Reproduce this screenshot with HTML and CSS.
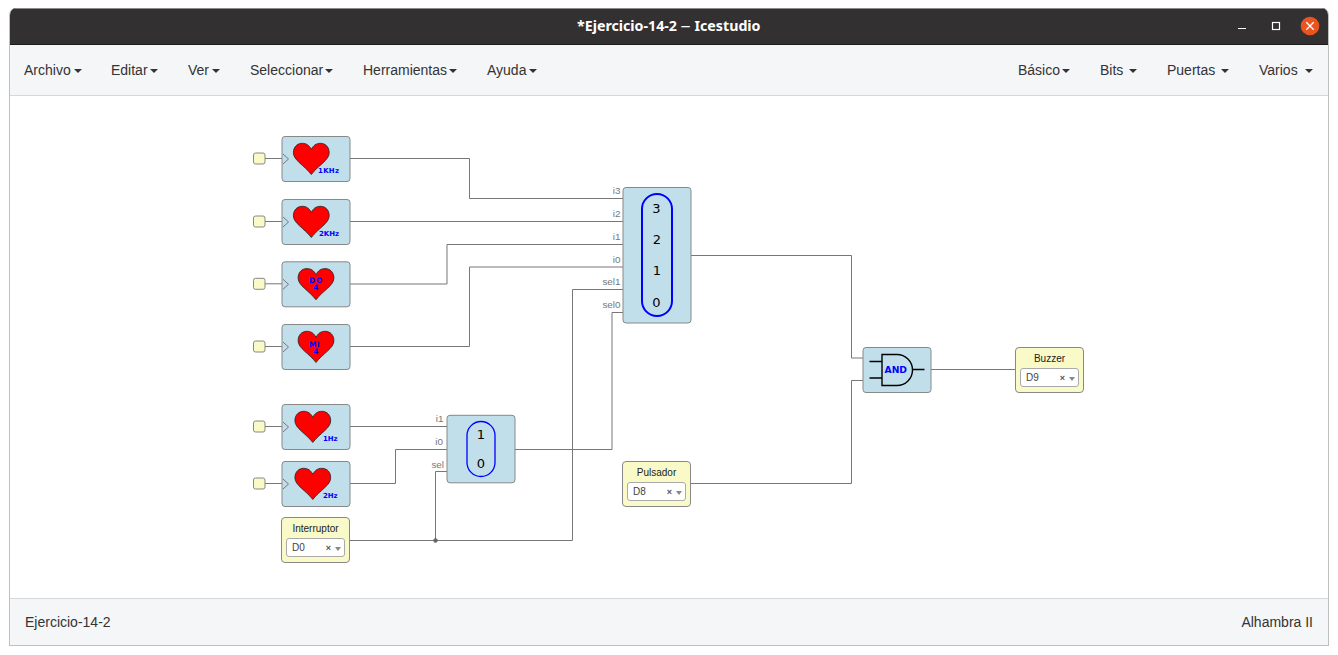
FILE: index.html
```html
<!DOCTYPE html>
<html lang="es">
<head>
<meta charset="utf-8">
<title>Ejercicio-14-2 – Icestudio</title>
<link rel="stylesheet" href="styles.css">
</head>
<body>
<div class="window">
  <header class="titlebar">
    <h1 class="title"><svg width="184" height="20"><text x="0" y="15" textLength="100" lengthAdjust="spacingAndGlyphs">*Ejercicio-14-2</text><text class="dash" x="103.500" y="15" textLength="10" lengthAdjust="spacingAndGlyphs">–</text><text x="117.500" y="15" textLength="66" lengthAdjust="spacingAndGlyphs">Icestudio</text></svg></h1>
    <div class="controls">
      <svg width="82" height="20" viewBox="0 0 82 20">
        <path d="M0 12.5h8" stroke="#fff" stroke-width="1.2"/>
        <rect x="34.5" y="6.5" width="7" height="7" fill="none" stroke="#fff" stroke-width="1.2"/>
        <circle cx="72" cy="10" r="9.3" fill="#e95420"/>
        <path d="M68.3 6.3l7.4 7.4M75.7 6.3l-7.4 7.4" stroke="#fff" stroke-width="1.3"/>
      </svg>
    </div>
  </header>
  <nav class="menubar">
    <ul class="menu">
      <li class="w-archivo">Archivo<i class="caret"></i></li>
      <li class="w-editar">Editar<i class="caret"></i></li>
      <li class="w-ver">Ver<i class="caret"></i></li>
      <li class="w-seleccionar">Seleccionar<i class="caret"></i></li>
      <li class="w-herramientas">Herramientas<i class="caret"></i></li>
      <li class="w-ayuda">Ayuda<i class="caret"></i></li>
    </ul>
    <ul class="menu">
      <li class="w-basico">Básico<i class="caret"></i></li>
      <li class="w-bits">Bits<i class="caret"></i></li>
      <li class="w-puertas">Puertas<i class="caret"></i></li>
      <li class="w-varios">Varios<i class="caret"></i></li>
    </ul>
  </nav>
  <main class="canvas">
    <svg class="graph" width="1318" height="502" viewBox="10 96 1318 502">
      <defs>
        <path id="heart" d="M18 6.500C20 2.500 23 .5 27 .5C32.500 .5 35.900 4.500 35.900 10C35.900 17.500 25 22.500 18 31.700C11 22.500 .1 17.500 .1 10C.1 4.500 3.500 .5 9 .5C13 .5 16 2.500 18 6.500Z"/>
        <g id="clocked">
          <path class="wire" d="M-17 22H0"/>
          <rect class="pin" x="-28.500" y="16.500" width="11.500" height="11" rx="2"/>
          <rect class="block" width="68" height="45" rx="3"/>
          <path class="clk" d="M1 17.500L6.500 22.500L1 27.500"/>
        </g>
      </defs>
      <g class="wire">
        <path d="M350 158.500H469.500V198.500H623"/>
        <path d="M350 221.500H623"/>
        <path d="M350 284H447V244.500H623"/>
        <path d="M350 346.500H469.500V267H623"/>
        <path d="M350 540.500H572.500V289.500H623"/>
        <path d="M515 449.500H612V312.500H623"/>
        <path d="M350 426.500H447"/>
        <path d="M350 483.500H395.500V449.500H447"/>
        <path d="M435.500 540.500V471.500H447"/>
        <path d="M691 255.500H851.500V358H863"/>
        <path d="M691 483.500H851.500V380.500H863"/>
        <path d="M931 369.500H1016"/>
      </g>
      <circle class="node" cx="435.500" cy="540.500" r="2.200"/>
      <g transform="translate(282 136.500)"><use href="#clocked"/><use class="heart" href="#heart" x="11.300" y="6.300"/><text class="freq" x="36" y="36.500" textLength="21">1KHz</text></g>
      <g transform="translate(282 199.500)"><use href="#clocked"/><use class="heart" href="#heart" x="11.300" y="6.300"/><text class="freq" x="37" y="36.500" textLength="20">2KHz</text></g>
      <g transform="translate(282 261.800)"><use href="#clocked"/><use class="heart" href="#heart" x="16" y="6.300"/><text class="freq note" x="27" y="21.700" textLength="13.500">DO</text><text class="freq note" x="31.200" y="28.700">4</text></g>
      <g transform="translate(282 324.500)"><use href="#clocked"/><use class="heart" href="#heart" x="16" y="6.300"/><text class="freq note" x="27" y="22" textLength="10.500">MI</text><text class="freq note" x="31.200" y="29">4</text></g>
      <g transform="translate(282 404.500)"><use href="#clocked"/><use class="heart" href="#heart" x="12.800" y="6.300"/><text class="freq" x="41" y="36.500" textLength="14.500">1Hz</text></g>
      <g transform="translate(282 461.500)"><use href="#clocked"/><use class="heart" href="#heart" x="12.800" y="6.300"/><text class="freq" x="41" y="36.500" textLength="14.500">2Hz</text></g>

      <rect class="block" x="623" y="187.500" width="68" height="135.500" rx="3"/>
      <rect class="slot wide" x="642" y="194" width="30" height="122" rx="15"/>
      <g class="digit"><text x="656.500" y="213">3</text><text x="657" y="244">2</text><text x="657" y="275">1</text><text x="656.500" y="307">0</text></g>
      <g class="port"><text x="620.500" y="194">i3</text><text x="620.500" y="217">i2</text><text x="620.500" y="240">i1</text><text x="620.500" y="263">i0</text><text x="620.500" y="285">sel1</text><text x="620.500" y="308">sel0</text></g>

      <rect class="block" x="447" y="415.300" width="68" height="67.500" rx="3"/>
      <rect class="slot" x="467" y="421.500" width="28" height="55" rx="14"/>
      <g class="digit"><text x="481" y="439">1</text><text x="481" y="468">0</text></g>
      <g class="port"><text x="443.500" y="422">i1</text><text x="443" y="445">i0</text><text x="444" y="468">sel</text></g>

      <rect class="block" x="863" y="347.500" width="68" height="45" rx="3"/>
      <path class="gate" d="M882 354.500H897A15.500 15.500 0 0 1 897 385.500H882ZM869.500 361.500H882M869.500 378H882M912.500 369.500H924.500"/>
      <text class="and" x="884.500" y="373.300" textLength="22.500" lengthAdjust="spacingAndGlyphs">AND</text>
    </svg>
    <section class="io interruptor"><h2>Interruptor</h2><div class="select"><span>D0</span><b>×</b><i></i></div></section>
    <section class="io pulsador"><h2>Pulsador</h2><div class="select"><span>D8</span><b>×</b><i></i></div></section>
    <section class="io buzzer"><h2>Buzzer</h2><div class="select"><span>D9</span><b>×</b><i></i></div></section>
  </main>
  <footer class="footer"><span>Ejercicio-14-2</span><span>Alhambra II</span></footer>
</div>
</body>
</html>
```
FILE: styles.css
```css
* { box-sizing: border-box; }
body { margin: 0; padding: 8px 9px; background: #fff; font-family: "Liberation Sans", Arial, sans-serif; font-size: 14px; color: #333; }
.window { width: 1320px; height: 638px; display: flex; flex-direction: column; border: 1px solid #bfbfbf; border-top: 0; border-radius: 7px 7px 0 0; overflow: hidden; }
.titlebar { height: 37px; flex: none; display: grid; grid-template-columns: 1fr 184px 1fr; align-items: center; background: #333031; border-top: 1px solid #8b8b8b; border-bottom: 1px solid #1c1b1b; }
.title { grid-column: 2; margin: 0 0 2px; height: 20px; font-size: 0; }
.title text { font: bold 14px "Noto Sans", sans-serif; fill: #fff; }
.title .dash { font-weight: 400; }
.controls { justify-self: end; height: 20px; margin-bottom: 1px; padding-right: 8px; }
.controls svg { display: block; }
.menubar { height: 51px; flex: none; display: flex; justify-content: space-between; padding: 0 0 0 14px; background: #f5f6f8; border-bottom: 1px solid #d5d8db; }
.menu { display: flex; margin: 0; padding: 0; list-style: none; line-height: 50px; }
.menu li { display: flex; align-items: center; white-space: nowrap; }
.caret { margin-left: 3px; margin-top: 2px; border: 4px solid transparent; border-top-color: #333; border-bottom: 0; }
.w-archivo { width: 87px; }
.w-editar { width: 77px; }
.w-ver { width: 62px; }
.w-seleccionar { width: 113px; }
.w-herramientas { width: 124px; }
.w-ayuda { width: 60px; }
.w-basico { width: 82px; }
.w-bits { width: 67px; }
.w-puertas { width: 92px; }
.w-varios { width: 69px; }
.w-editar .caret, .w-seleccionar .caret, .w-herramientas .caret, .w-basico .caret { margin-left: 2px; }
.w-bits .caret, .w-puertas .caret { margin-left: 6px; }
.w-varios .caret { margin-left: 7px; }
.canvas { position: relative; height: 502px; flex: none; background: #fff; }
.graph { display: block; }
.wire { fill: none; stroke: #777; stroke-width: 1; }
.node { fill: #666; }
.pin { fill: #fafac8; stroke: #888; }
.block { fill: #c0dfeb; stroke: #888; }
.clk { fill: none; stroke: #777; }
.heart { fill: #f00; stroke: #222; stroke-width: .8; }
.freq { font: bold 7px "DejaVu Sans", sans-serif; fill: #00f; }
.freq.note { font-size: 7.500px; }
.digit { font: 13px "DejaVu Sans", sans-serif; fill: #000; text-anchor: middle; }
.port { font: 9.900px "Liberation Sans", sans-serif; fill: #777; text-anchor: end; }
.slot { fill: none; stroke: #00f; stroke-width: 1.3; }
.slot.wide { stroke-width: 2; }
.gate { fill: none; stroke: #000; stroke-width: 1.4; }
.and { font: bold 9.500px "DejaVu Sans", sans-serif; fill: #00f; }
.io { position: absolute; width: 69px; height: 46px; padding: 5px 4px 0; background: #fafac8; border: 1px solid #888; border-radius: 4px; }
.interruptor { left: 271px; top: 421px; }
.pulsador { left: 612px; top: 365px; }
.buzzer { left: 1005px; top: 251px; }
.io h2 { margin: 0 0 3px; font-weight: 400; font-size: 10px; line-height: 12px; text-align: center; color: #222; }
.select { display: flex; align-items: center; height: 19px; padding: 0 3px 0 5px; font-size: 10px; border: 1px solid #aaa; border-radius: 3px; background: #fff; color: #444; }
.select span { flex: 1; }
.select b { font-size: 9px; margin-right: 4px; color: #555; }
.select i { border: 3px solid transparent; border-top: 4px solid #888; border-bottom: 0; margin-top: 2px; }
.footer { flex: 1; display: flex; justify-content: space-between; padding: 0 15px; line-height: 46px; background: #f5f6f8; border-top: 1px solid #d5d8db; }
```
